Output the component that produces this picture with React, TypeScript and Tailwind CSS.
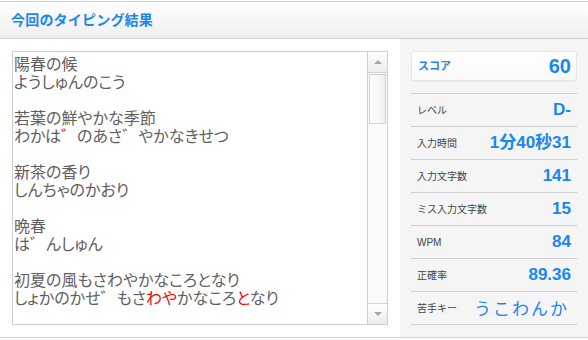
const jp = "font-['Liberation_Sans','Noto_Sans_CJK_JP',sans-serif]";

type Seg = { t: string; miss?: boolean };

const lines: Seg[][] = [
  [{ t: '陽春の候' }],
  [{ t: 'ようしゅんのこう' }],
  [],
  [{ t: '若葉の鮮やかな季節' }],
  [{ t: 'わかは' }, { t: '゛', miss: true }, { t: 'のあさ゛やかなきせつ' }],
  [],
  [{ t: '新茶の香り' }],
  [{ t: 'しんちゃのかおり' }],
  [],
  [{ t: '晩春' }],
  [{ t: 'は゛んしゅん' }],
  [],
  [{ t: '初夏の風もさわやかなころとなり' }],
  [
    { t: 'しょかのかせ゛もさ' },
    { t: 'わや', miss: true },
    { t: 'かなころ' },
    { t: 'と', miss: true },
    { t: 'なり' },
  ],
];

const rows = [
  { label: 'レベル', value: 'D-' },
  { label: '入力時間', value: '1分40秒31' },
  { label: '入力文字数', value: '141' },
  { label: 'ミス入力文字数', value: '15' },
  { label: 'WPM', value: '84' },
  { label: '正確率', value: '89.36' },
];

function ScrollBar() {
  return (
    <div className="w-[20px] border-l border-[#cfcfcf] bg-[#fafafa] flex flex-col">
      <div className="h-[21px] border-b border-[#d4d4d4] bg-gradient-to-b from-white to-[#ececec] flex items-center justify-center">
        <div className="w-0 h-0 border-x-[4px] border-x-transparent border-b-[4px] border-b-[#a8a8a8]" />
      </div>
      <div className="mx-px mt-px h-[50px] border border-[#d0d0d0] bg-gradient-to-r from-white to-[#f0f0f0]" />
      <div className="flex-1" />
      <div className="h-[21px] border-t border-[#d4d4d4] bg-gradient-to-b from-white to-[#ececec] flex items-center justify-center">
        <div className="w-0 h-0 border-x-[4px] border-x-transparent border-t-[4px] border-t-[#a8a8a8]" />
      </div>
    </div>
  );
}

export default function App() {
  return (
    <div className={`w-[588px] h-[340px] bg-white pt-px ${jp}`}>
      <div className="h-[38px] border-y border-[#d2d2d2] bg-gradient-to-b from-white to-[#efefef] flex items-center pl-[11px]">
        <h1 className="text-[14px] font-bold text-[#1a87f0] tracking-[0.2px]">今回のタイピング結果</h1>
      </div>

      <div className="flex border-b border-[#d2d2d2] h-[299px]">
        <div className="pl-3 pt-3 pr-3">
          <div className="w-[376px] h-[274px] border border-[#cfcfcf] flex">
            <div className="flex-1 pl-px pt-[2px] text-[16px] leading-[18px] text-[#606060] font-['Noto_Sans_CJK_JP',sans-serif] [font-feature-settings:'palt'] overflow-hidden">
              {lines.map((segs, i) => (
                <div key={i} className="h-[18px] whitespace-nowrap">
                  {segs.map((s, j) => (
                    <span key={j} className={s.miss ? 'text-[#ff0000]' : ''}>{s.t}</span>
                  ))}
                </div>
              ))}
            </div>
            <ScrollBar />
          </div>
        </div>

        <div className="flex-1 bg-[#f5f5f5] px-[11px] pt-3">
          <div className="h-[30px] rounded-[3px] border border-[#e6e6e6] bg-gradient-to-b from-white to-[#f9f9f9] shadow-[0_1px_1px_rgba(0,0,0,0.04)] flex items-center justify-between pl-[6px] pr-[5px]">
            <span className="text-[11px] font-bold text-[#1a87f0]">スコア</span>
            <span className="text-[20px] font-bold text-[#1a87f0]">60</span>
          </div>

          <div className="mt-3 border-t border-[#d0d0d0]">
            {rows.map(r => (
              <div key={r.label} className="h-[33px] border-b border-[#d0d0d0] flex items-center justify-between pl-[6px] pr-[6px]">
                <span className="text-[10px] text-[#444]">{r.label}</span>
                <span className="text-[17px] font-bold text-[#1a87f0]">{r.value}</span>
              </div>
            ))}
            <div className="h-[33px] border-b border-[#d0d0d0] flex items-center justify-between pl-[6px] pr-[8px]">
              <span className="text-[10px] text-[#444]">苦手キー</span>
              <span className="text-[17px] text-[#1a87f0] tracking-[2px] font-['Noto_Sans_CJK_JP',sans-serif]">うこわんか</span>
            </div>
          </div>
        </div>
      </div>
    </div>
  );
}
